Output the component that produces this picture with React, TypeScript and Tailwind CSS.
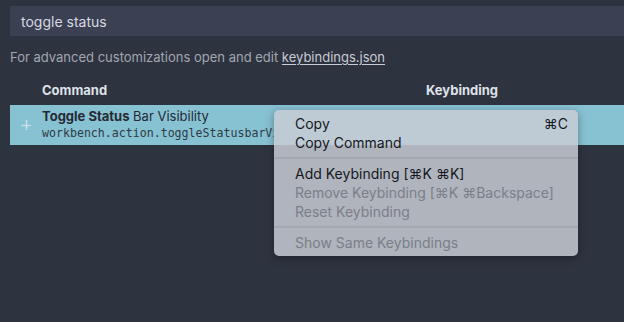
import { FC } from 'react'

const sans = { fontFamily: 'Inter, "Liberation Sans", sans-serif' }

const MenuItem: FC<{ label: string; shortcut?: string; disabled?: boolean }> = ({ label, shortcut, disabled }) => (
  <div className={`flex h-[19px] items-center justify-between pl-[21px] pr-[10px] text-[14px] ${disabled ? 'text-[#7b7f88]' : 'text-[#16181d]'}`}>
    <span>{label}</span>
    {shortcut && <span>{shortcut}</span>}
  </div>
)

const App: FC = () => {
  return (
    <div className="relative h-[322px] w-[624px] overflow-hidden bg-[#2e3340]" style={sans}>
      <div className="pl-[10px] pt-[6px]">
        <div className="flex h-[30px] items-center bg-[#3b4053] pl-[11px] text-[14px] text-[#d6d9e0]">
          toggle status
        </div>
      </div>

      <div className="mt-[12px] pl-[10px] text-[13px] text-[#a3a7b0]">
        For advanced customizations open and edit{' '}
        <span className="text-[#c9ccd3] underline underline-offset-2">keybindings.json</span>
      </div>

      <div className="mt-[13px] flex pl-[42px] text-[13px] font-bold text-[#dfe2e8]">
        <span className="w-[384px]">Command</span>
        <span>Keybinding</span>
      </div>

      <div className="ml-[10px] mt-[5px] flex h-[40px] items-center bg-[#87c2d3]">
        <div className="flex w-[32px] justify-center">
          <svg width="11" height="11" viewBox="0 0 11 11">
            <path d="M5.5 0.5v10M0.5 5.5h10" stroke="#e4eef2" strokeWidth="1.6" strokeDasharray="1.2 0.8" />
          </svg>
        </div>
        <div className="flex flex-col leading-[17px]">
          <span className="text-[13px] text-[#262a33]">
            <b>Toggle Status</b> Bar Visibility
          </span>
          <span
            className="w-[232px] overflow-hidden whitespace-nowrap text-[11.6px] text-[#2f3a44]"
            style={{ fontFamily: '"DejaVu Sans Mono", "Liberation Mono", monospace' }}
          >
            workbench.action.toggleStatusbarVisibility
          </span>
        </div>
      </div>

      <div className="absolute left-[274px] top-[110px] w-[304px] rounded-[5px] bg-[#c8cdd5]/[0.84] py-[4px] shadow-[0_2px_8px_rgba(0,0,0,0.35)]">
        <MenuItem label="Copy" shortcut="⌘C" />
        <MenuItem label="Copy Command" />
        <div className="my-[5px] h-[2px] bg-[#9fa3ab]/70" />
        <MenuItem label="Add Keybinding [⌘K ⌘K]" />
        <MenuItem label="Remove Keybinding [⌘K ⌘Backspace]" disabled />
        <MenuItem label="Reset Keybinding" disabled />
        <div className="my-[5px] h-[2px] bg-[#9fa3ab]/70" />
        <MenuItem label="Show Same Keybindings" disabled />
      </div>
    </div>
  )
}

export default App
